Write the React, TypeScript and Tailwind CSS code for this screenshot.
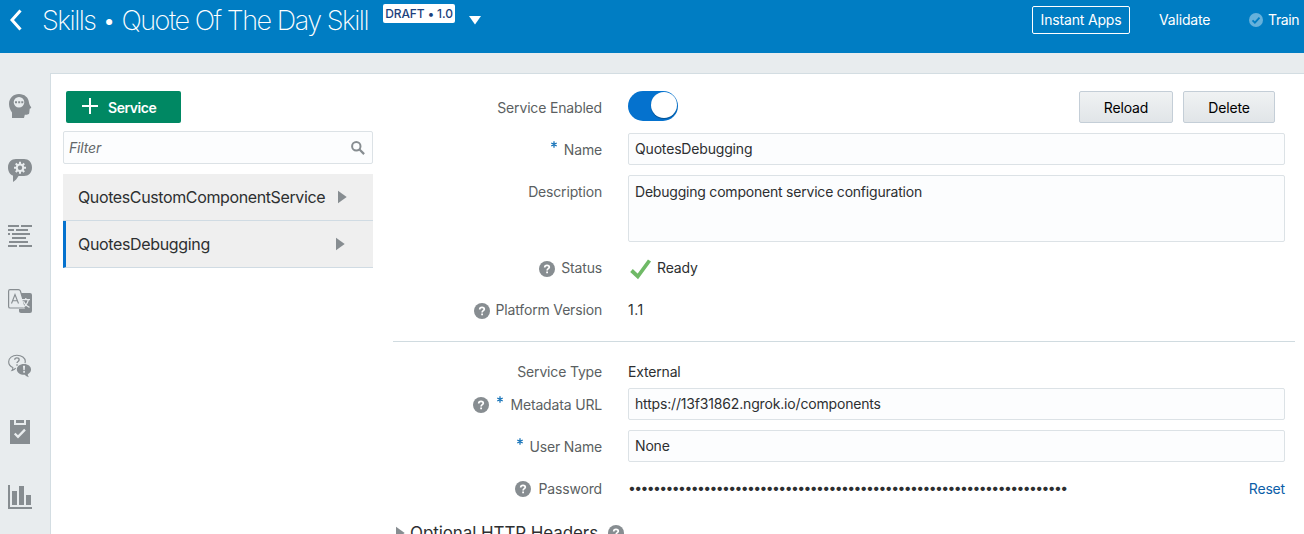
import type { ReactNode } from 'react';

function BotHeadIcon() {
  return (
    <svg width="24" height="26" viewBox="0 0 24 26">
      <path
        fill="#878d91"
        fillRule="evenodd"
        d="M11 1C16.5 1 20.5 4.5 21 9.500C21.100 11.500 22.800 13.500 23.200 14.500C23.300 15.200 22.500 15.600 21.700 15.800L21.200 20.200C21 21.300 20 21.600 16.800 21.700L16 25H4V19.500C2.500 17.500 1 14.500 1 11C1 5 5.500 1 11 1ZM11 4a5.300 5.300 0 1 0 0 10.600a5.300 5.300 0 1 0 0-10.600Z"
      />
      <path fill="#878d91" d="M7 8.300h2v2H7zM10.200 8.300h2v2h-2zM13.300 8.300h2v2h-2z" />
    </svg>
  );
}

function GearBubbleIcon() {
  return (
    <svg width="24" height="24" viewBox="0 0 24 24">
      <path
        fill="#878d91"
        d="M8 0h8c4.600 0 8 3.200 8 8.500S20.600 17 16 17h-5.500C9 19.500 7.500 21.500 5 23V16.600C2 15.600 0 12.500 0 8.500 0 3.200 3.400 0 8 0Z"
      />
      <g fill="#e8ecee" transform="translate(0 -1)">
        <circle cx="12" cy="9.700" r="4.300" />
        <path d="M11 3.700h2v12h-2zM6 8.700h12v2H6z" />
        <path d="M11 3.700h2v12h-2zM6 8.700h12v2H6z" transform="rotate(45 12 9.700)" />
      </g>
      <circle cx="12" cy="8.700" r="2.200" fill="#878d91" />
    </svg>
  );
}

function FlowIcon() {
  return (
    <svg width="24" height="22" viewBox="0 0 24 22">
      <path
        fill="#878d91"
        d="M0 0h11v2H0zM13 0h11v2H13zM0 4h6v2H0zM8 4h12v2H8zM0 8h2v2H0zM4 8h18v2H4zM4 12h14v2H4zM1 16h19v2H1zM0 20h9v2H0zM11 20h13v2H11z"
      />
    </svg>
  );
}

function TranslateIcon() {
  return (
    <svg width="24" height="24" viewBox="0 0 24 24" fill="none">
      <path
        fill="#878d91"
        d="M12.500 4H22a2 2 0 0 1 2 2v16a2 2 0 0 1-2 2h-9c-1.200 0-2-.7-2-2v-2h6Z"
      />
      <path
        d="M2 .6h8.500c1 0 1.500.4 1.900 1.400L17.500 19H2.200C1.200 19 .6 18.400.6 17.400V2.200C.6 1.200 1.200.6 2 .6Z"
        stroke="#878d91"
        strokeWidth="1.200"
        fill="#e8ecee"
      />
      <path d="M3.500 14.500 7 5.500l3.500 9M4.600 11.700h4.800" stroke="#878d91" strokeWidth="1.100" />
      <path
        d="M14 10.600h8M17.800 9v1.500M20.300 10.800c-.6 3-2.300 5.600-5 7.200M15.500 12.300c1.200 2.800 3.300 5 6 6"
        stroke="#e8ecee"
        strokeWidth="1.300"
      />
    </svg>
  );
}

function QuestionBubblesIcon() {
  return (
    <svg width="25" height="24" viewBox="0 0 25 24" fill="none">
      <path
        d="M8 14.200c-.9 1.100-2 1.900-3.700 2.300.8-1 .9-1.900.7-3C2.300 12.300.7 10.300.7 7.500.7 3.700 4.500.8 9.300.8c4.900 0 8.700 2.800 8.700 6.300 0 .8-.1 1.300-.3 1.900"
        stroke="#878d91"
        strokeWidth="1.200"
      />
      <path
        d="M7 5.600c0-1.300 1-2 2.300-2s2.300.8 2.300 1.900c0 1.800-2.200 1.800-2.200 3.500M9.400 10.300v1.500"
        stroke="#878d91"
        strokeWidth="1.400"
      />
      <path
        fill="#878d91"
        d="M16.600 10c4.300 0 7.400 2.600 7.400 5.700 0 2.200-1.300 3.900-3.400 4.800 0 1.200.4 2.200 1.300 3.100-2-.3-3.500-1.200-4.500-2.400-4.600.2-8.200-2.200-8.200-5.500 0-3.100 3.100-5.700 7.400-5.700Z"
      />
      <path fill="#e8ecee" d="M15.600 11.800h2.200l-.4 4.500h-1.400zM15.900 17.300h1.700V19h-1.700z" />
    </svg>
  );
}

function ClipboardIcon() {
  return (
    <svg width="20" height="24" viewBox="0 0 20 24">
      <path fill="#878d91" d="M0 0h4v5h12V0h4v24H0zM6 0h8v3H6z" />
      <path d="m4.700 13.500 3.300 3.300 7-7.200" fill="none" stroke="#e8ecee" strokeWidth="2.300" />
    </svg>
  );
}

function BarChartIcon() {
  return (
    <svg width="24" height="24" viewBox="0 0 24 24">
      <path fill="#878d91" d="M0 0h2v22h22v2H0zM4 6h5v14H4zM11 1h5v19h-5zM18 10h5v10h-5z" />
    </svg>
  );
}

function HelpIcon() {
  return (
    <svg width="16" height="16" viewBox="0 0 16 16" className="shrink-0">
      <circle cx="8" cy="8" r="8" fill="#878d91" />
      <path
        d="M5.700 6.500C5.700 5 6.600 4.300 8 4.300s2.300.7 2.300 1.900C10.300 7.700 8.100 7.700 8.100 9.500"
        fill="none"
        stroke="#fff"
        strokeWidth="1.700"
      />
      <path fill="#fff" d="M7.200 10.400H9v1.800H7.200z" />
    </svg>
  );
}

function Required() {
  return (
    <svg width="6" height="7" viewBox="0 0 6 7" className="mb-[11px] shrink-0">
      <path d="M3 .3v6.400M.3 2l5.400 3M5.700 2 .3 5" stroke="#0b6cb5" strokeWidth="1.200" />
    </svg>
  );
}

function Arrow() {
  return (
    <svg width="9" height="14" viewBox="0 0 9 14" className="shrink-0">
      <path d="M0 .7 8.700 7 0 13.300Z" fill="#878d91" />
    </svg>
  );
}

function Row({ label, lead, children, className = 'h-8' }: {
  label: string;
  lead?: ReactNode;
  children: ReactNode;
  className?: string;
}) {
  return (
    <div className={`flex shrink-0 gap-[26px] ${className}`}>
      <div className="flex h-8 w-[209px] shrink-0 items-center justify-end whitespace-nowrap pt-0.5 text-[#5b5f62]">
        {lead}
        <span>{label}</span>
      </div>
      <div className="flex min-w-0 flex-1 items-center">{children}</div>
    </div>
  );
}

function Field({ value, className = 'h-full pt-[5px]' }: { value: string; className?: string }) {
  return (
    <div className={`w-full rounded-[2px] border border-[#dce2e6] bg-[#fcfdfe] pl-1.5 text-[#2d2f31] ${className}`}>
      {value}
    </div>
  );
}

const navIcons = [
  BotHeadIcon,
  GearBubbleIcon,
  FlowIcon,
  TranslateIcon,
  QuestionBubblesIcon,
  ClipboardIcon,
  BarChartIcon,
];

export default function App() {
  return (
    <div className="flex h-[534px] w-[1304px] flex-col overflow-hidden bg-[#e8ecee] font-['Inter','Liberation_Sans',sans-serif] text-[14px] leading-5 tracking-[-0.17px]">
      <header className="flex h-[53px] shrink-0 items-start bg-[#007dc3] text-white">
        <svg width="12" height="22" viewBox="0 0 12 22" className="ml-2.5 mt-[9px] shrink-0">
          <path d="M10.500 1.500 2 11l8.500 9.500" fill="none" stroke="#fff" strokeWidth="3" />
        </svg>
        <h1 className="ml-5 w-[328px] shrink-0 whitespace-nowrap text-[27px] font-extralight leading-[42px] tracking-[-1.48px]">
          Skills • Quote Of The Day Skill
        </h1>
        <span className="ml-[13px] mt-1 flex h-[19px] w-[72px] shrink-0 items-center justify-center whitespace-nowrap rounded-[2px] bg-white text-[12px] font-medium tracking-[-0.100px] text-[#1c3f7c]">
          DRAFT • 1.0
        </span>
        <svg width="12" height="9" viewBox="0 0 12 9" className="ml-3.5 mt-4">
          <path d="M0 0h12L6 8.500Z" fill="#fff" />
        </svg>
        <div className="ml-auto mt-1.5 flex h-7 items-center">
          <button className="h-7 w-[98px] whitespace-nowrap rounded-[2px] border border-white">Instant Apps</button>
          <span className="ml-[29px] w-[51px]">Validate</span>
          <svg width="14" height="14" viewBox="0 0 14 14" className="ml-[39px]">
            <circle cx="7" cy="7" r="7" fill="#66b1db" />
            <path d="m3.500 7.300 2.400 2.400 4.600-5" fill="none" stroke="#007dc3" strokeWidth="1.800" />
          </svg>
          <span className="ml-[5px] mr-[5px] w-[31px] tracking-[-0.35px]">Train</span>
        </div>
      </header>

      <div className="flex min-h-0 flex-1">
        <nav className="flex w-[50px] shrink-0 flex-col items-center pr-[10px] pt-5">
          {navIcons.map((Icon, i) => (
            <div key={i} className="flex h-[65.200px] w-6 shrink-0 items-center justify-center">
              <Icon />
            </div>
          ))}
        </nav>

        <main className="mt-5 flex min-w-0 flex-1 border-l border-t border-[#d3dde2] bg-white pl-3 pt-[17px]">
          <aside className="flex w-[310px] shrink-0 flex-col">
            <button className="ml-[3px] flex h-8 w-[115px] items-center rounded-[2px] bg-[#008863] pl-4 pt-px font-semibold tracking-[-0.45px] text-white">
              <svg width="16" height="16" viewBox="0 0 16 16" className="-mt-1 mr-2.5">
                <path d="M8 0v16M0 8h16" stroke="#fff" strokeWidth="2" />
              </svg>
              Service
            </button>
            <div className="mt-2 flex h-[33px] items-center justify-between rounded-[2px] border border-[#dce2e6] bg-[#fcfdfe] pl-[5px] pr-[7px] italic text-[#63676a]">
              <span>Filter</span>
              <svg width="14" height="14" viewBox="0 0 14 14">
                <circle cx="5.300" cy="5.300" r="4.200" fill="none" stroke="#878d91" strokeWidth="2" />
                <path d="m8.300 8.300 4.800 4.800" stroke="#878d91" strokeWidth="2.200" />
              </svg>
            </div>
            <ul className="mt-2.5 text-[16px] text-[#2d2f31]">
              <li className="flex h-[47px] items-center justify-between border-b border-[#d0dbe3] bg-[#efefef] pl-[15px] pr-[26px]">
                <span className="tracking-[-0.38px]">QuotesCustomComponentService</span>
                <Arrow />
              </li>
              <li className="flex h-[47px] items-center justify-between border-b border-l-[3px] border-b-[#d0dbe3] border-l-[#0572ce] bg-[#efefef] pl-3 pr-7">
                <span className="tracking-[-0.34px]">QuotesDebugging</span>
                <Arrow />
              </li>
            </ul>
          </aside>

          <section className="ml-5 flex min-w-0 flex-1 flex-col overflow-hidden pr-[9px]">
            <Row label="Service Enabled">
              <div className="mb-[3px] flex h-[30px] w-[50px] items-center justify-end rounded-full bg-[#0572ce] p-px">
                <span className="mb-0.5 size-[26px] rounded-full bg-white shadow-[0_1px_1px_rgba(0,0,0,0.3)]" />
              </div>
              <div className="ml-auto mr-5 flex gap-2.5 text-black">
                <button className="h-8 w-[94px] rounded-[2px] border border-[#c4ced7] bg-linear-to-b from-[#f0f2f3] to-[#e1e5e8] pt-0.5">
                  Reload
                </button>
                <button className="h-8 w-[92px] rounded-[2px] border border-[#c4ced7] bg-linear-to-b from-[#f0f2f3] to-[#e1e5e8] pt-0.5">
                  Delete
                </button>
              </div>
            </Row>
            <Row label="Name" className="mt-2.5 h-8 pr-2.5" lead={<span className="mr-[7px]"><Required /></span>}>
              <Field value="QuotesDebugging" />
            </Row>
            <Row label="Description" className="mt-2.5 h-[67px] pr-2.5">
              <Field value="Debugging component service configuration" className="h-full pt-1.5 tracking-[-0.21px]" />
            </Row>
            <Row label="Status" className="mt-[9px] h-[33px]" lead={<span className="mr-1.5 pt-px"><HelpIcon /></span>}>
              <svg width="22" height="21" viewBox="0 0 22 21" className="ml-0.5 mt-1">
                <path d="m1.500 11.500 6.300 6L19.500 1.500" fill="none" stroke="#6fb966" strokeWidth="3.800" />
              </svg>
              <span className="ml-[5px] text-[#2d2f31]">Ready</span>
            </Row>
            <Row label="Platform Version" className="mt-[9px] h-[33px]" lead={<span className="mr-1.5 pt-px"><HelpIcon /></span>}>
              <span className="tracking-[0.5px] text-[#2d2f31]">1.1</span>
            </Row>
            <hr className="mb-[13px] mt-[15px] border-[#d0dbe0]" />
            <Row label="Service Type" className="h-[33px]">
              <span className="text-[#2d2f31]">External</span>
            </Row>
            <Row
              label="Metadata URL"
              className="h-8 pr-2.5"
              lead={
                <span className="mr-[7px] flex items-center gap-2">
                  <HelpIcon />
                  <Required />
                </span>
              }
            >
              <Field value="https://13f31862.ngrok.io/components" />
            </Row>
            <Row label="User Name" className="mt-2.5 h-8 pr-2.5" lead={<span className="mr-[7px]"><Required /></span>}>
              <Field value="None" />
            </Row>
            <Row label="Password" className="mt-2.5 h-8 pr-2.5" lead={<span className="mr-2"><HelpIcon /></span>}>
              <span className="whitespace-nowrap tracking-[-1.61px] text-[#2d2f31]">{'•'.repeat(70)}</span>
              <a className="ml-auto pt-0.5 text-[#0b5ea8]">Reset</a>
            </Row>
            <div className="mt-[13px] flex h-8 shrink-0 items-center pl-[3px] text-[17px] text-[#2d2f31]">
              <Arrow />
              <span className="ml-[5px] mr-2.5 tracking-[-0.09px]">Optional HTTP Headers</span>
              <HelpIcon />
            </div>
          </section>
        </main>
      </div>
    </div>
  );
}
